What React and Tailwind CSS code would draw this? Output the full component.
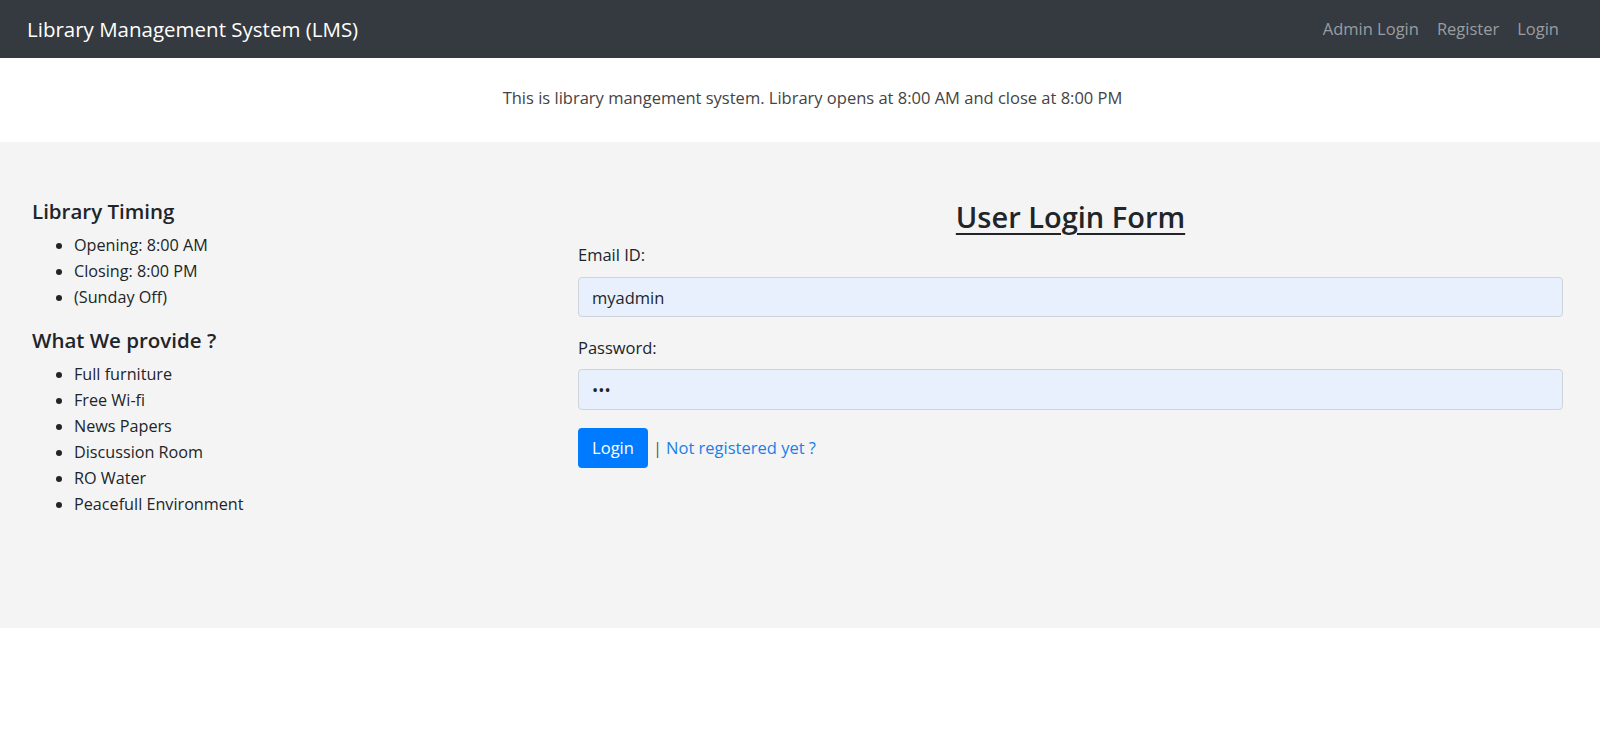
import React, { useState } from 'react';

const navLinks = ['Admin Login', 'Register', 'Login'];
const timings = ['Opening: 8:00 AM', 'Closing: 8:00 PM', '(Sunday Off)'];
const provides = [
  'Full furniture',
  'Free Wi-fi',
  'News Papers',
  'Discussion Room',
  'RO Water',
  'Peacefull Environment',
];

const App = () => {
  const [email, setEmail] = useState('myadmin');
  const [password, setPassword] = useState('abc');

  return (
    <div className="min-h-screen bg-white font-['Open_Sans',sans-serif] text-[#212529]">
      <nav className="flex h-[58px] items-center justify-between bg-[#343a40] pl-[27px] pr-[32px]">
        <a href="#" className="text-[20.5px] leading-none text-white">
          Library Management System (LMS)
        </a>
        <ul className="flex items-center">
          {navLinks.map((link) => (
            <li key={link}>
              <a href="#" className="px-[9px] text-[16.5px] text-[#9a9da0] hover:text-white">
                {link}
              </a>
            </li>
          ))}
        </ul>
      </nav>

      <div className="flex h-[84px] items-center justify-center pb-[4px] pl-[25px]">
        <p className="text-[16.5px] text-[#444]">
          This is library mangement system. Library opens at 8:00 AM and close at 8:00 PM
        </p>
      </div>

      <section className="flex h-[486px] bg-[#f4f4f4] pl-[32px] pr-[37px] pt-[56px]">
        <div className="w-[546px] shrink-0">
          <h5 className="mb-[8px] text-[20.5px] font-semibold leading-[26px]">Library Timing</h5>
          <ul className="mb-[17px] list-disc pl-[42px] text-[16.2px] leading-[26px]">
            {timings.map((t) => (
              <li key={t}>{t}</li>
            ))}
          </ul>
          <h5 className="mb-[8px] text-[20.5px] font-semibold leading-[26px]">What We provide ?</h5>
          <ul className="list-disc pl-[42px] text-[16.2px] leading-[26px]">
            {provides.map((p) => (
              <li key={p}>{p}</li>
            ))}
          </ul>
        </div>

        <div className="flex-1">
          <h3 className="mb-[7px] text-center text-[29px] font-semibold leading-[37px] underline underline-offset-[5px] decoration-[2px]">
            User Login Form
          </h3>
          <form onSubmit={(e) => e.preventDefault()}>
            <div className="mb-[18px]">
              <label className="mb-[9px] block text-[16.5px] leading-[26px]">Email ID:</label>
              <input
                type="text"
                value={email}
                onChange={(e) => setEmail(e.target.value)}
                className="block h-[40px] w-full rounded-[4px] border border-[#ced4da] bg-[#e8f0fe] px-[13px] text-[16.5px] text-[#212529] outline-none"
              />
            </div>
            <div className="mb-[18px]">
              <label className="mb-[8px] block text-[16.5px] leading-[26px]">Password:</label>
              <input
                type="password"
                value={password}
                onChange={(e) => setPassword(e.target.value)}
                className="block h-[41px] w-full rounded-[4px] border border-[#ced4da] bg-[#e8f0fe] px-[13px] text-[16.5px] text-[#212529] outline-none"
              />
            </div>
            <div className="flex items-center text-[16.5px]">
              <button
                type="submit"
                className="h-[40px] w-[70px] rounded-[4px] bg-[#007bff] text-white hover:bg-[#0069d9]"
              >
                Login
              </button>
              <span className="ml-[5px] text-[#555]">|</span>
              <a href="#" className="ml-[4px] text-[#1a7fe8] hover:underline">
                Not registered yet ?
              </a>
            </div>
          </form>
        </div>
      </section>
    </div>
  );
};

export default App;
